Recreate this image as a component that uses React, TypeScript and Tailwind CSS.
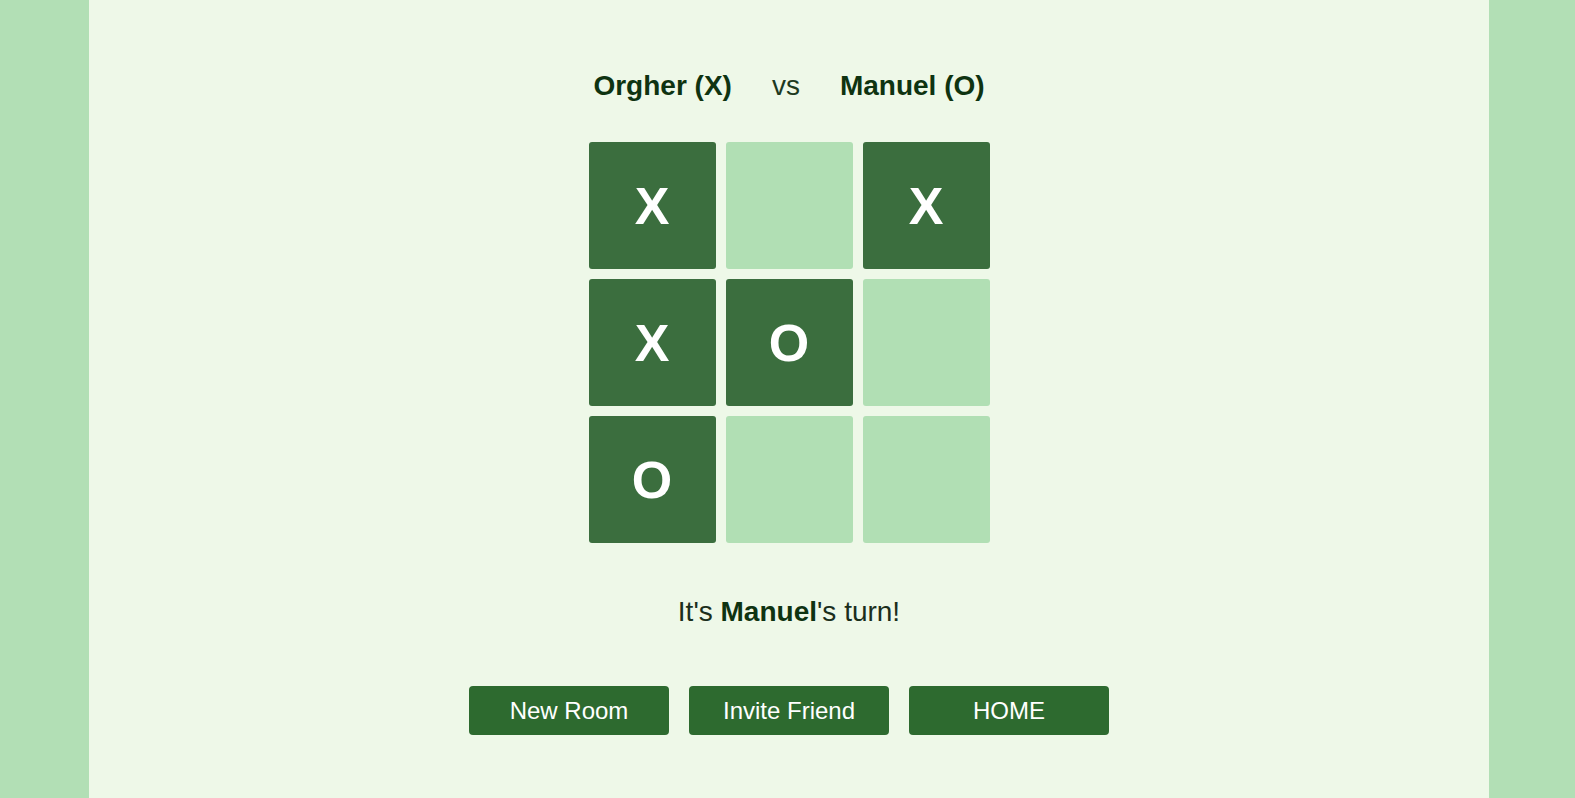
const board: ("X" | "O" | null)[] = ["X", null, "X", "X", "O", null, "O", null, null];

const Cell = ({ value }: { value: "X" | "O" | null }) => (
  <div
    className={
      value
        ? "flex h-[127px] w-[127px] items-center justify-center rounded-[3px] bg-[#3b6e3e] text-[52px] font-bold text-white"
        : "h-[127px] w-[127px] rounded-[3px] bg-[#b1dfb4]"
    }
  >
    {value}
  </div>
);

export default function App() {
  return (
    <div className="flex h-[798px] w-full font-['Liberation_Sans',Arial,sans-serif]">
      <div className="w-[89px] shrink-0 bg-[#b2dfb5]" />
      <main className="flex w-[1400px] shrink-0 flex-col items-center bg-[#eef8e8] pt-[70px]">
        <div className="flex items-center gap-10 text-[28px] leading-[32px] text-[#0e3311]">
          <span className="font-bold">Orgher (X)</span>
          <span className="text-[#1d3a1f]">vs</span>
          <span className="font-bold">Manuel (O)</span>
        </div>

        <div className="mt-10 grid grid-cols-3 gap-[10px]">
          {board.map((v, i) => (
            <Cell key={`cell-${i}`} value={v} />
          ))}
        </div>

        <p className="mt-[53px] text-[28px] leading-[32px] text-[#1b2e1c]">
          It's <b className="text-[#0e3311]">Manuel</b>'s turn!
        </p>

        <div className="mt-[58px] flex gap-5">
          {["New Room", "Invite Friend", "HOME"].map((label) => (
            <button
              key={label}
              type="button"
              className="h-[49px] w-[200px] rounded-[4px] bg-[#2d6a2f] text-[24px] text-white"
            >
              {label}
            </button>
          ))}
        </div>
      </main>
      <div className="flex-1 bg-[#b2dfb5]" />
    </div>
  );
}
